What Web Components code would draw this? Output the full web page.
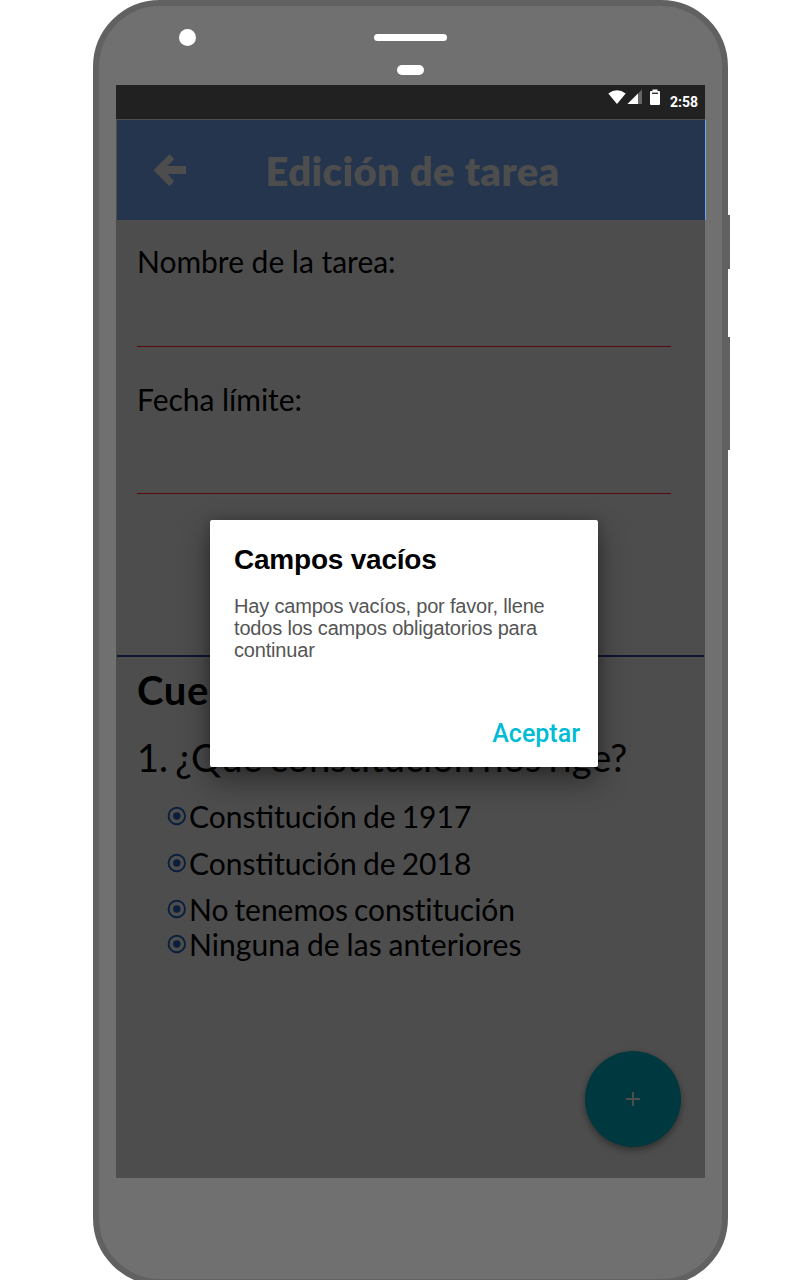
<!DOCTYPE html>
<html lang="es">
<head>
<meta charset="utf-8">
<title>Edición de tarea</title>
<style>
html,body{margin:0;padding:0;background:#fff;overflow:hidden}
body{width:800px;height:1280px;font-family:Lato,sans-serif;font-variant-ligatures:none}
</style>
</head>
<body>
<phone-frame>
  <status-bar>2:58</status-bar>
  <app-bar>Edición de tarea</app-bar>
  <task-form>
    <form-field style="--gap:68px">Nombre de la tarea:</form-field>
    <form-field style="--gap:77px">Fecha límite:</form-field>
  </task-form>
  <quiz-section>
    <span slot="title">Cuestionario</span>
    <span slot="question">1. ¿Qué constitución nos rige?</span>
    <radio-option style="--h:47px;--ls:0px;--ws:-1.5px">Constitución de 1917</radio-option>
    <radio-option style="--h:46px;--ls:0px;--ws:-1.5px">Constitución de 2018</radio-option>
    <radio-option style="--h:35px;--ls:-.05px;--ws:-1.5px">No tenemos constitución</radio-option>
    <radio-option style="--h:36px;--ls:.08px;--ws:-1px">Ninguna de las anteriores</radio-option>
  </quiz-section>
  <add-button slot="overlay"></add-button>
  <alert-dialog slot="overlay">
    <span slot="title">Campos vacíos</span>
    Hay campos vacíos, por favor, llene todos los campos obligatorios para continuar
    <span slot="action">Aceptar</span>
  </alert-dialog>
</phone-frame>
<script>
const define = (name, html) => {
  const template = document.createElement('template');
  template.innerHTML = html;
  customElements.define(name, class extends HTMLElement {
    constructor() {
      super();
      this.attachShadow({ mode: 'open' }).append(template.content.cloneNode(true));
    }
  });
};

define('phone-frame', `
<style>
:host{display:block;position:relative;width:635px;height:1285px;margin-left:93px}
.body{box-sizing:border-box;width:635px;height:1285px;border:6px solid #616161;border-radius:67px;background:#707070;padding:0 17px;display:flex;flex-direction:column}
.top{height:79px;flex:none;display:grid;grid-template-columns:63px 1fr;align-items:start;padding-left:0}
.cam{width:17px;height:17px;border-radius:50%;background:#fff;margin:23px 0 0 63px}
.ears{display:flex;flex-direction:column;align-items:center;padding:28px 63px 0 0}
.a{width:73px;height:7px;border-radius:4px;background:#fff}
.b{width:27px;height:10px;border-radius:5px;background:#fff;margin-top:24px}
.screen{position:relative;height:1093px;width:589px;background:#4d4d4d;flex:none}
.key{position:absolute;left:635px;width:2px;background:#616161}
</style>
<div class="body">
  <div class="top"><div class="cam"></div><div class="ears"><div class="a"></div><div class="b"></div></div></div>
  <div class="screen"><slot></slot><slot name="overlay"></slot></div>
</div>
<div class="key" style="top:215px;height:54px"></div>
<div class="key" style="top:337px;height:113px"></div>`);

define('status-bar', `
<style>
:host{display:flex;box-sizing:border-box;height:34px;background:#212121;color:#fff;justify-content:flex-end;padding-right:7px;font:bold 14px/16px Roboto,sans-serif}
svg{display:block;flex:none}
.t{margin:9px 0 0 8px}
</style>
<svg width="54" height="34" viewBox="608 85 54 34">
  <path fill="#fff" d="M608.300 93.600Q617 86.800 625.700 93.600L617 104Z"/>
  <path fill="#666" d="M642 89.500V104H627.500Z"/>
  <path fill="#fff" d="M638 93.500V104H627.500Z"/>
  <path fill="#fff" d="M652.500 89.500h5v1.500h1.500q1 0 1 1v12q0 1-1 1h-8q-1 0-1-1v-12q0-1 1-1h1.500z"/>
  <path fill="#333" d="M652 92.600h6v1.400h-6z"/>
</svg>
<div class="t"><slot></slot></div>`);

define('app-bar', `
<style>
:host{display:grid;grid-template-columns:148.500px 1fr;width:588px;height:100px;margin:1px 0 0 1px;background:#24354d;border-right:1px solid #6ea6ef;color:#4d4d4d;font:800 40px/48px Lato,sans-serif;letter-spacing:.36px}
svg{display:block}
.t{margin-top:27px;white-space:nowrap}
</style>
<svg width="120" height="100" viewBox="117 120 120 100"><path fill="#4d4d4d" d="M153.400 170.300L169.500 154.300L174.200 159L167.600 166H186V174H167.600L174.200 181.200L169.500 186.200Z"/></svg>
<div class="t"><slot></slot></div>`);

define('task-form', `
<style>
:host{display:flex;flex-direction:column;box-sizing:border-box;height:435px;padding:23px 34px 0 21px;gap:34px}
</style><slot></slot>`);

define('form-field', `
<style>
:host{display:block;font:30px/36px Lato,sans-serif;letter-spacing:-.02px;color:#000}
.l{height:calc(36px + var(--gap));box-sizing:border-box;border-bottom:1px solid #5c0a0e;white-space:nowrap}
</style><div class="l"><slot></slot></div>`);

define('quiz-section', `
<style>
:host{display:block;margin:0 1px;border-top:2px solid #0d1730;padding:9px 0 0 20px;color:#000;white-space:nowrap}
.h{font:bold 40px/48px Lato,sans-serif;letter-spacing:.6px;height:68px}
.q{font:38px/46px Lato,sans-serif;letter-spacing:0;word-spacing:-2.400px;height:64px}
.o{padding-left:30px}
</style>
<div class="h"><slot name="title"></slot></div>
<div class="q"><slot name="question"></slot></div>
<div class="o"><slot></slot></div>`);

define('radio-option', `
<style>
:host{display:flex;height:var(--h);font:30px/36px Lato,sans-serif;letter-spacing:var(--ls);word-spacing:var(--ws);color:#000}
svg{display:block;flex:none;margin:8px 2px 0 0}
</style>
<svg width="20" height="20" viewBox="0 0 20 20"><circle cx="9.800" cy="10" r="8.200" fill="none" stroke="#0b1e3c" stroke-width="1.900"/><circle cx="9.800" cy="10" r="3.700" fill="#0b1e3c"/></svg>
<div><slot></slot></div>`);

define('add-button', `
<style>
:host{position:absolute;right:24px;bottom:31px;width:96px;height:96px;border-radius:50%;background:#00383f;box-shadow:0 3px 7px rgba(0,0,0,.4);display:flex;align-items:center;justify-content:center}
svg{display:block}
</style>
<svg width="14" height="14" viewBox="0 0 14 14"><path d="M6 0h2v6h6v2h-6v6h-2v-6h-6v-2h6z" fill="#4d4d4d"/></svg>`);

define('alert-dialog', `
<style>
:host{position:absolute;left:94px;top:435px;width:388px;height:247px;box-sizing:border-box;padding:24px;background:#fff;border-radius:2px;box-shadow:0 13px 30px rgba(0,0,0,.42),0 0 12px rgba(0,0,0,.22);display:flex;flex-direction:column}
.t{font:bold 28px/32px "Liberation Sans",sans-serif;letter-spacing:-.22px;color:#000}
.m{font:20px/22px "Liberation Sans",sans-serif;letter-spacing:-.18px;color:#555;margin-top:19px;width:325px}
.a{font:500 25px/30px Roboto,sans-serif;color:#00bcd4;margin:auto -6px -6px auto}
</style>
<div class="t"><slot name="title"></slot></div>
<div class="m"><slot></slot></div>
<div class="a"><slot name="action"></slot></div>`);
</script>
</body>
</html>
